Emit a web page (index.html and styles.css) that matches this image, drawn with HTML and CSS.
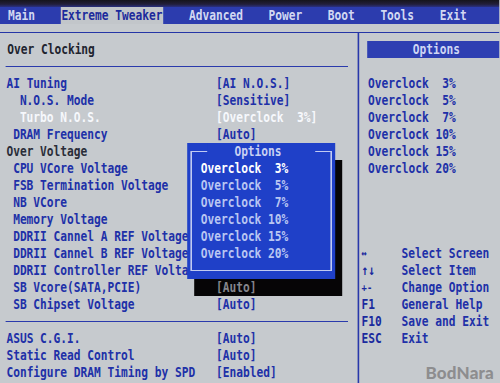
FILE: index.html
```html
<!DOCTYPE html>
<html>
<head>
<meta charset="utf-8">
<link rel="stylesheet" href="styles.css">
</head>
<body>
<div class="screen">
  <div class="topband"></div>
  <nav class="menubar">
    <span class="tab">Main</span>
    <span class="tab active">Extreme Tweaker</span>
    <span class="tab">Advanced</span>
    <span class="tab">Power</span>
    <span class="tab">Boot</span>
    <span class="tab">Tools</span>
    <span class="tab">Exit</span>
  </nav>
  <div class="gap"></div>
  <div class="hline"></div>
  <div class="main">
    <section class="left">
      <div class="heading">Over Clocking</div>
      <div class="sep"></div>
      <div class="rows">
        <div class="row"><span class="lbl">AI Tuning</span><span class="val">[AI N.O.S.]</span></div>
        <div class="row"><span class="lbl i2">N.O.S. Mode</span><span class="val">[Sensitive]</span></div>
        <div class="row sel"><span class="lbl i2">Turbo N.O.S.</span><span class="val">[Overclock  3%]</span></div>
        <div class="row"><span class="lbl i1">DRAM Frequency</span><span class="val">[Auto]</span></div>
        <div class="row group"><span class="lbl">Over Voltage</span></div>
        <div class="row"><span class="lbl i1">CPU VCore Voltage</span></div>
        <div class="row"><span class="lbl i1">FSB Termination Voltage</span></div>
        <div class="row"><span class="lbl i1">NB VCore</span></div>
        <div class="row"><span class="lbl i1">Memory Voltage</span></div>
        <div class="row"><span class="lbl i1">DDRII Cannel A REF Voltage</span></div>
        <div class="row"><span class="lbl i1">DDRII Cannel B REF Voltage</span></div>
        <div class="row"><span class="lbl i1">DDRII Controller REF Voltage</span></div>
        <div class="row"><span class="lbl i1">SB Vcore(SATA,PCIE)</span><span class="val dim">[Auto]</span></div>
        <div class="row"><span class="lbl i1">SB Chipset Voltage</span><span class="val">[Auto]</span></div>
      </div>
      <div class="sep"></div>
      <div class="rows">
        <div class="row"><span class="lbl">ASUS C.G.I.</span><span class="val">[Auto]</span></div>
        <div class="row"><span class="lbl">Static Read Control</span><span class="val">[Auto]</span></div>
        <div class="row"><span class="lbl">Configure DRAM Timing by SPD</span><span class="val">[Enabled]</span></div>
      </div>

      <div class="popup">
        <div class="frame">
          <div class="ptitle"><span class="ptext">Options</span></div>
          <div class="opt current">Overclock  3%</div>
          <div class="opt">Overclock  5%</div>
          <div class="opt">Overclock  7%</div>
          <div class="opt">Overclock 10%</div>
          <div class="opt">Overclock 15%</div>
          <div class="opt">Overclock 20%</div>
        </div>
      </div>
    </section>

    <aside class="right">
      <div class="rhead">Options</div>
      <div class="olist">
        <div class="oitem">Overclock  3%</div>
        <div class="oitem">Overclock  5%</div>
        <div class="oitem">Overclock  7%</div>
        <div class="oitem">Overclock 10%</div>
        <div class="oitem">Overclock 15%</div>
        <div class="oitem">Overclock 20%</div>
      </div>
      <div class="keys">
        <div class="key"><span class="k small">&#8596;</span><span class="d">Select Screen</span></div>
        <div class="key"><span class="k">&#8593;&#8595;</span><span class="d">Select Item</span></div>
        <div class="key"><span class="k small">+-</span><span class="d">Change Option</span></div>
        <div class="key"><span class="k">F1</span><span class="d">General Help</span></div>
        <div class="key"><span class="k">F10</span><span class="d">Save and Exit</span></div>
        <div class="key"><span class="k">ESC</span><span class="d">Exit</span></div>
      </div>
    </aside>
  </div>
</div>
<div class="watermark">BodNara</div>
</body>
</html>
```
FILE: styles.css
```css
html, body {
  margin: 0;
  padding: 0;
  width: 500px;
  height: 383px;
  overflow: hidden;
  background: #c6cace;
}

body {
  position: relative;
}

.screen {
  width: 624px;
  height: 383px;
  transform: scaleX(0.8);
  transform-origin: 0 0;
  font-family: "DejaVu Sans Mono", "Liberation Mono", monospace;
  font-weight: bold;
  font-size: 14px;
  line-height: 17px;
  color: #2030a8;
  white-space: nowrap;
}

.topband {
  height: 7px;
  background: linear-gradient(180deg, #15141c 0%, #221f3a 60%, #2a3080 100%);
}

.menubar {
  height: 17px;
  display: flex;
  gap: 32px;
  padding-left: 10px;
  background: #2c3cae;
  color: #d2d8f2;
}

.tab.active {
  padding: 0 1px;
  background: #c2c6ca;
  color: #1c2a9c;
}

.gap {
  height: 8px;
}

.hline {
  height: 1px;
  background: #2535a6;
}

.main {
  display: flex;
  height: 350px;
}

.left {
  position: relative;
  width: 447px;
  flex: none;
  padding-top: 8px;
  border-right: 2px solid #2838aa;
}

.heading {
  height: 17px;
  padding-left: 9px;
  color: #20232e;
}

.sep {
  height: 8px;
  margin: 0 12px 8px 7px;
  border-bottom: 1px solid #2a3aac;
}

.rows {
  padding-left: 8px;
}

.row {
  display: grid;
  grid-template-columns: 262px 1fr;
  height: 17px;
}

.lbl.i1 { padding-left: 1ch; }
.lbl.i2 { padding-left: 2ch; }

.val, .opt, .oitem {
  white-space: pre;
}

.row.sel { color: #f6f8fc; }
.row.group { color: #2a2d38; }

.val.dim {
  position: relative;
  z-index: 3;
  color: #85868c;
}

.popup {
  position: absolute;
  z-index: 2;
  top: 110px;
  left: 234px;
  width: 22ch;
  height: 136px;
  box-sizing: border-box;
  padding: 8px 0.5ch;
  background: #1f40c8;
  box-shadow: 8.75px 17px 0 #060506;
  color: #b9c6f2;
}

.frame {
  box-sizing: border-box;
  height: 120px;
  border-top: 1px solid #c0caf2;
  border-bottom: 1px solid #c0caf2;
  border-left: 2px solid #c0caf2;
  border-right: 2px solid #c0caf2;
}

.ptitle {
  height: 17px;
  margin-top: -9px;
  text-align: center;
}

.ptext {
  display: inline-block;
  width: 15ch;
  padding-right: 1ch;
  background: #1f40c8;
  color: #c8d0f2;
}

.opt {
  height: 17px;
  padding-left: calc(1.5ch - 2px);
}

.opt.current {
  color: #ffffff;
}

.right {
  flex: 1;
  padding-top: 8px;
}

.rhead {
  height: 17px;
  margin-left: 10px;
  padding-left: 8px;
  background: #2e3fb2;
  color: #cfd6f4;
  text-align: center;
}

.olist {
  margin-top: 17px;
  padding-left: 11px;
}

.oitem {
  height: 17px;
}

.keys {
  margin-top: 68px;
  padding-left: 3px;
}

.key {
  display: grid;
  grid-template-columns: 50px 1fr;
  height: 17px;
}

.k {
  color: #1a2a9e;
}

.k.small {
  font-size: 11px;
}

.watermark {
  position: absolute;
  right: 6px;
  bottom: 1px;
  font-family: Lato, "DejaVu Sans", sans-serif;
  font-weight: 900;
  font-size: 17px;
  line-height: 18px;
  color: #8d8d8f;
  letter-spacing: 0.2px;
}
```
